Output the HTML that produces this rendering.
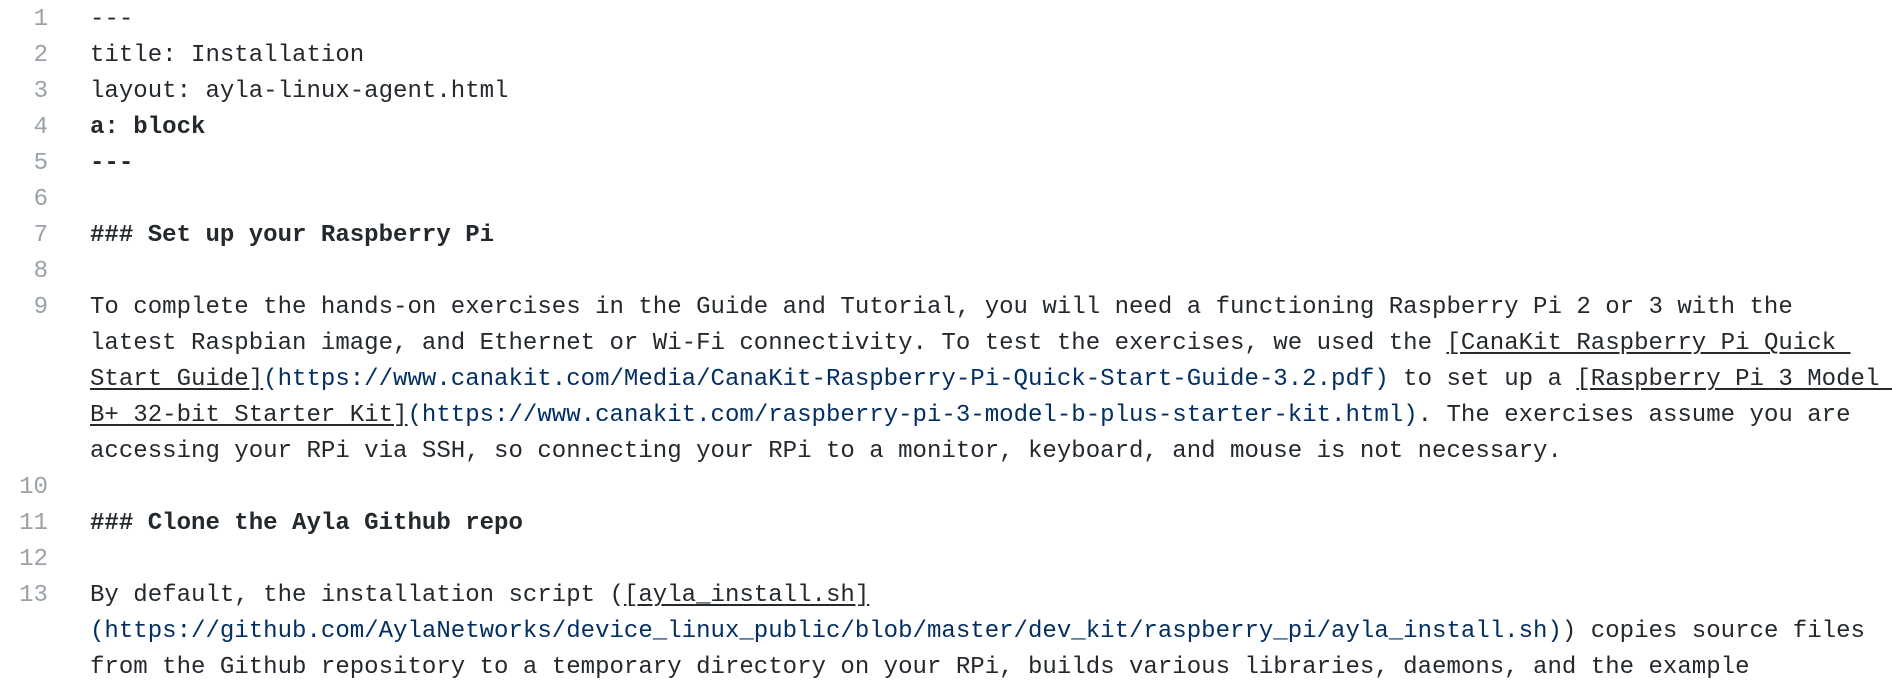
<!DOCTYPE html>
<html><head><meta charset="utf-8"><style>
html,body{margin:0;padding:0;background:#fff;width:1892px;height:686px;overflow:hidden}
.wrap{position:absolute;top:2px;left:0;width:1892px}
.r{position:relative;height:36px;line-height:36px;font-family:"Liberation Mono",monospace;font-size:24.05px;color:#24292e;white-space:pre}
.n{position:absolute;left:0;width:48px;text-align:right;color:#9aa1a8}
.t{position:absolute;left:90px}
b{font-weight:bold}
u{text-decoration:underline;text-underline-offset:3px}
.l{color:#032f62}
</style></head><body><div class="wrap">
<div class="r"><span class="n">1</span><span class="t">---</span></div>
<div class="r"><span class="n">2</span><span class="t">title: Installation</span></div>
<div class="r"><span class="n">3</span><span class="t">layout: ayla-linux-agent.html</span></div>
<div class="r"><span class="n">4</span><span class="t"><b>a: block</b></span></div>
<div class="r"><span class="n">5</span><span class="t"><b>---</b></span></div>
<div class="r"><span class="n">6</span><span class="t"></span></div>
<div class="r"><span class="n">7</span><span class="t"><b>### Set up your Raspberry Pi</b></span></div>
<div class="r"><span class="n">8</span><span class="t"></span></div>
<div class="r"><span class="n">9</span><span class="t">To complete the hands-on exercises in the Guide and Tutorial, you will need a functioning Raspberry Pi 2 or 3 with the</span></div>
<div class="r"><span class="t">latest Raspbian image, and Ethernet or Wi-Fi connectivity. To test the exercises, we used the <u>[CanaKit Raspberry Pi Quick </u></span></div>
<div class="r"><span class="t"><u>Start Guide]</u><span class="l">(https://www.canakit.com/Media/CanaKit-Raspberry-Pi-Quick-Start-Guide-3.2.pdf)</span> to set up a <u>[Raspberry Pi 3 Model </u></span></div>
<div class="r"><span class="t"><u>B+ 32-bit Starter Kit]</u><span class="l">(https://www.canakit.com/raspberry-pi-3-model-b-plus-starter-kit.html)</span>. The exercises assume you are</span></div>
<div class="r"><span class="t">accessing your RPi via SSH, so connecting your RPi to a monitor, keyboard, and mouse is not necessary.</span></div>
<div class="r"><span class="n">10</span><span class="t"></span></div>
<div class="r"><span class="n">11</span><span class="t"><b>### Clone the Ayla Github repo</b></span></div>
<div class="r"><span class="n">12</span><span class="t"></span></div>
<div class="r"><span class="n">13</span><span class="t">By default, the installation script (<u>[ayla_install.sh]</u></span></div>
<div class="r"><span class="t"><span class="l">(https://github.com/AylaNetworks/device_linux_public/blob/master/dev_kit/raspberry_pi/ayla_install.sh)</span>) copies source files</span></div>
<div class="r"><span class="t">from the Github repository to a temporary directory on your RPi, builds various libraries, daemons, and the example</span></div>
</div></body></html>
